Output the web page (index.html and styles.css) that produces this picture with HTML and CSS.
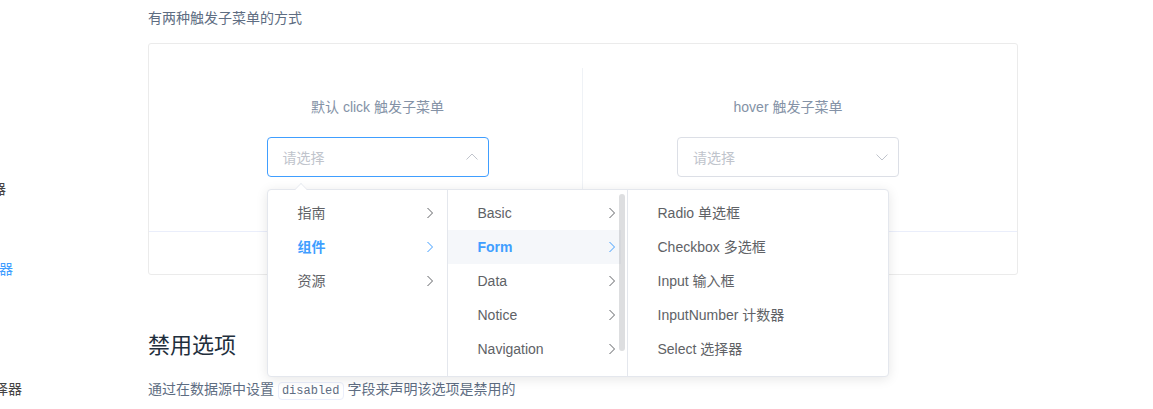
FILE: index.html
```html
<!DOCTYPE html>
<html lang="zh">
<head>
<meta charset="utf-8">
<title>Cascader</title>
<link rel="stylesheet" href="styles.css">
</head>
<body>
<div class="page">
  <aside class="sidebar">
    <div class="side-item end6"><span>InputNumber 计数器</span></div>
    <div class="side-item end0"><span>Select 选择器</span></div>
    <div class="side-item end12 active"><span>Cascader 级联选择器</span></div>
    <div class="side-item end0"><span>Switch 开关</span></div>
    <div class="side-item end0"><span>Slider 滑块</span></div>
    <div class="side-item end21"><span>TimePicker 时间选择器</span></div>
  </aside>
  <main class="content">
    <p class="intro">有两种触发子菜单的方式</p>
    <section class="demo">
      <div class="source">
        <div class="block block-left">
          <span class="demonstration">默认 click 触发子菜单</span>
          <div class="cascader">
            <div class="input focused">
              <span class="placeholder">请选择</span>
              <svg class="caret" width="12" height="8" viewBox="0 0 12 8"><path d="M0.5 6.5 L6 1 L11.5 6.5" fill="none" stroke="#c0c4cc" stroke-width="1"/></svg>
            </div>
            <div class="popper">
              <div class="popper-arrow"></div>
              <div class="menus">
                <ul class="menu menu1">
                  <li class="node"><span>指南</span><svg class="chev" width="8" height="12" viewBox="0 0 8 12"><path d="M1.5 1 L6.5 6 L1.5 11" fill="none" stroke="#606266" stroke-width="1"/></svg></li>
                  <li class="node active"><span>组件</span><svg class="chev" width="8" height="12" viewBox="0 0 8 12"><path d="M1.5 1 L6.5 6 L1.5 11" fill="none" stroke="#409eff" stroke-width="1"/></svg></li>
                  <li class="node"><span>资源</span><svg class="chev" width="8" height="12" viewBox="0 0 8 12"><path d="M1.5 1 L6.5 6 L1.5 11" fill="none" stroke="#606266" stroke-width="1"/></svg></li>
                </ul>
                <div class="menu menu2">
                  <ul class="menu-list">
                    <li class="node"><span>Basic</span><svg class="chev" width="8" height="12" viewBox="0 0 8 12"><path d="M1.5 1 L6.5 6 L1.5 11" fill="none" stroke="#606266" stroke-width="1"/></svg></li>
                    <li class="node active hl"><span>Form</span><svg class="chev" width="8" height="12" viewBox="0 0 8 12"><path d="M1.5 1 L6.5 6 L1.5 11" fill="none" stroke="#409eff" stroke-width="1"/></svg></li>
                    <li class="node"><span>Data</span><svg class="chev" width="8" height="12" viewBox="0 0 8 12"><path d="M1.5 1 L6.5 6 L1.5 11" fill="none" stroke="#606266" stroke-width="1"/></svg></li>
                    <li class="node"><span>Notice</span><svg class="chev" width="8" height="12" viewBox="0 0 8 12"><path d="M1.5 1 L6.5 6 L1.5 11" fill="none" stroke="#606266" stroke-width="1"/></svg></li>
                    <li class="node"><span>Navigation</span><svg class="chev" width="8" height="12" viewBox="0 0 8 12"><path d="M1.5 1 L6.5 6 L1.5 11" fill="none" stroke="#606266" stroke-width="1"/></svg></li>
                    <li class="node"><span>Others</span><svg class="chev" width="8" height="12" viewBox="0 0 8 12"><path d="M1.5 1 L6.5 6 L1.5 11" fill="none" stroke="#606266" stroke-width="1"/></svg></li>
                  </ul>
                  <div class="scrollbar"></div>
                </div>
                <div class="menu menu3">
                  <ul class="menu-list">
                    <li class="node"><span>Radio 单选框</span></li>
                    <li class="node"><span>Checkbox 多选框</span></li>
                    <li class="node"><span>Input 输入框</span></li>
                    <li class="node"><span>InputNumber 计数器</span></li>
                    <li class="node"><span>Select 选择器</span></li>
                    <li class="node"><span>Cascader 级联选择器</span></li>
                  </ul>
                </div>
              </div>
            </div>
          </div>
        </div>
        <div class="block">
          <span class="demonstration">hover 触发子菜单</span>
          <div class="cascader">
            <div class="input">
              <span class="placeholder">请选择</span>
              <svg class="caret" width="12" height="8" viewBox="0 0 12 8"><path d="M0.5 1.5 L6 7 L11.5 1.5" fill="none" stroke="#c0c4cc" stroke-width="1"/></svg>
            </div>
          </div>
        </div>
      </div>
      <div class="meta"></div>
    </section>
    <h3 class="title">禁用选项</h3>
    <p class="desc">通过在数据源中设置 <code>disabled</code> 字段来声明该选项是禁用的</p>
  </main>
</div>
</body>
</html>
```
FILE: styles.css
```css
* { box-sizing: border-box; }
html, body { margin: 0; padding: 0; background: #fff; }
body {
  font-family: "Liberation Sans", "Noto Sans CJK SC", sans-serif;
  font-size: 14px;
  color: #5e6d82;
  overflow: hidden;
  height: 409px;
}
.page { display: flex; align-items: flex-start; }
.sidebar {
  width: 30px;
  flex: none;
  overflow: hidden;
  padding-top: 168px;
}
.side-item {
  height: 40px;
  display: flex;
  align-items: center;
  justify-content: flex-end;
  white-space: nowrap;
  color: #444;
  font-size: 14px;
}
.side-item.active { color: #409eff; }
.side-item span { flex: none; }
.end0 { width: 0; }
.end6 { width: 6px; }
.end12 { width: 13px; }
.end21 { width: 22px; }

.content { margin-left: 118px; width: 870px; }
.intro { margin: 8px 0 14px; line-height: 21px; color: #5e6d82; }

.demo { border: 1px solid #ebebeb; border-radius: 3px; }
.source { padding: 24px; display: flex; }
.block {
  width: 50%;
  padding: 30px 0;
  display: flex;
  flex-direction: column;
  align-items: center;
}
.block-left { border-right: 1px solid #eff2f6; }
.demonstration {
  display: block;
  color: #8492a6;
  font-size: 14px;
  line-height: 19px;
  margin-bottom: 20px;
}
.cascader { position: relative; width: 222px; }
.input {
  height: 40px;
  border: 1px solid #dcdfe6;
  border-radius: 4px;
  display: flex;
  align-items: center;
  padding: 0 10px 0 15px;
  background: #fff;
}
.input.focused { border-color: #409eff; }
.placeholder { flex: 1; color: #c0c4cc; font-size: 14px; }
.caret { flex: none; }

.popper {
  position: absolute;
  left: 0;
  top: 52px;
  z-index: 10;
  background: #fff;
  border: 1px solid #e4e7ed;
  border-radius: 4px;
  box-shadow: 0 2px 12px 0 rgba(0,0,0,.1);
}
.popper-arrow {
  position: absolute;
  left: 27px;
  top: -7px;
  width: 12px;
  height: 12px;
  background: #fff;
  border-left: 1px solid #e4e7ed;
  border-top: 1px solid #e4e7ed;
  transform: rotate(45deg) scale(0.7, 0.7);
}
.menus { display: flex; height: 186px; }
.menu {
  margin: 0;
  padding: 6px 0;
  list-style: none;
  height: 186px;
  overflow: hidden;
  border-right: 1px solid #e4e7ed;
}
.menu1 { width: 180px; }
.menu2 { width: 180px; padding: 0; position: relative; }
.menu3 { width: 260px; padding: 0; border-right: none; }
.menu-list { list-style: none; margin: 0; padding: 6px 0; }
.node {
  height: 34px;
  line-height: 34px;
  padding: 0 10px 0 30px;
  display: flex;
  align-items: center;
  color: #606266;
  font-size: 14px;
  white-space: nowrap;
}
.node span { flex: 1; }
.node.active { color: #409eff; font-weight: bold; }
.node.hl { background: #f5f7fa; margin-right: 6px; }
.chev { flex: none; }
.menu1 .chev { margin-right: 3px; }
.menu2 .node { padding-right: 11px; }
.menu2 .node.hl { padding-right: 5px; }
.scrollbar {
  position: absolute;
  right: 2px;
  top: 4px;
  width: 6px;
  height: 157px;
  border-radius: 4px;
  background: rgba(144,147,153,.3);
}

.meta { height: 43px; border-top: 1px solid #eaeefb; }

.title {
  margin: 56px 0 18px;
  font-size: 22px;
  line-height: 30px;
  font-weight: 400;
  color: #1f2f3d;
}
.desc { margin: 0; line-height: 21px; color: #5e6d82; font-size: 14px; }
.desc code {
  font-family: "Liberation Mono", "DejaVu Sans Mono", monospace;
  font-size: 12px;
  color: #5e6d82;
  background: #fff;
  border: 1px solid #eaeefb;
  border-radius: 4px;
  padding: 1px 3px;
}
```
